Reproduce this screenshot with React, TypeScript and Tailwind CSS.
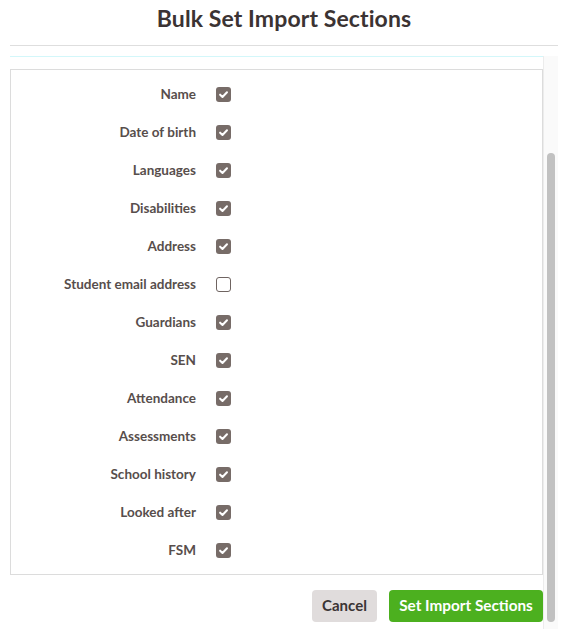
import React from "react";

const rows: { label: string; checked: boolean }[] = [
  { label: "Name", checked: true },
  { label: "Date of birth", checked: true },
  { label: "Languages", checked: true },
  { label: "Disabilities", checked: true },
  { label: "Address", checked: true },
  { label: "Student email address", checked: false },
  { label: "Guardians", checked: true },
  { label: "SEN", checked: true },
  { label: "Attendance", checked: true },
  { label: "Assessments", checked: true },
  { label: "School history", checked: true },
  { label: "Looked after", checked: true },
  { label: "FSM", checked: true },
];

function Check({ checked }: { checked: boolean }) {
  if (!checked) {
    return (
      <span className="flex h-[15px] w-[15px] items-center justify-center rounded-[3px] border border-[#6f6461] bg-white" />
    );
  }
  return (
    <span className="flex h-[15px] w-[15px] items-center justify-center rounded-[3px] bg-[#776c68]">
      <svg width="11" height="11" viewBox="0 0 12 12" fill="none">
        <path d="M2.3 6.2 L4.9 8.7 L9.8 3.6" stroke="white" strokeWidth="2.2" strokeLinecap="round" strokeLinejoin="round" />
      </svg>
    </span>
  );
}

export default function App() {
  return (
    <div className="h-[629px] w-[565px] overflow-hidden bg-white pl-[10px] pr-[7px] font-['Lato',sans-serif]">
      <div className="flex h-[45px] items-center justify-center pb-[8px]">
        <h1 className="text-[23px] font-bold tracking-[0.1px] text-[#3b3333]">Bulk Set Import Sections</h1>
      </div>
      <div className="h-px bg-[#dedede]" />
      <div className="mt-[10px] flex">
        <div className="flex-1">
          <div className="h-px bg-[#d3f7fa]" />
          <div className="mt-[12px] w-[533px] border border-[#dcdcdc] py-[5px]">
            {rows.map((r) => (
              <div key={r.label} className="flex h-[38px] items-center">
                <div className="w-[185px] pt-[1px] text-right text-[13.5px] font-bold text-[#574e4c]">{r.label}</div>
                <div className="ml-[20px]">
                  <Check checked={r.checked} />
                </div>
              </div>
            ))}
          </div>
          <div className="mt-[15px] flex w-[533px] justify-end gap-[12px]">
            <button className="h-[32px] w-[65px] rounded-[4px] bg-[#e0dcdc] pb-[2px] text-[15px] font-bold text-[#3b3434]">
              Cancel
            </button>
            <button className="h-[32px] w-[154px] rounded-[4px] bg-[#4cb01f] pb-[2px] text-[15.3px] font-bold text-white">
              Set Import Sections
            </button>
          </div>
        </div>
        <div className="h-[580px] w-[15px] border-l border-[#ececec] bg-[#fafafa]">
          <div className="mx-auto mt-[97px] h-[469px] w-[8px] rounded-full bg-[#c1c1c1]" />
        </div>
      </div>
    </div>
  );
}
